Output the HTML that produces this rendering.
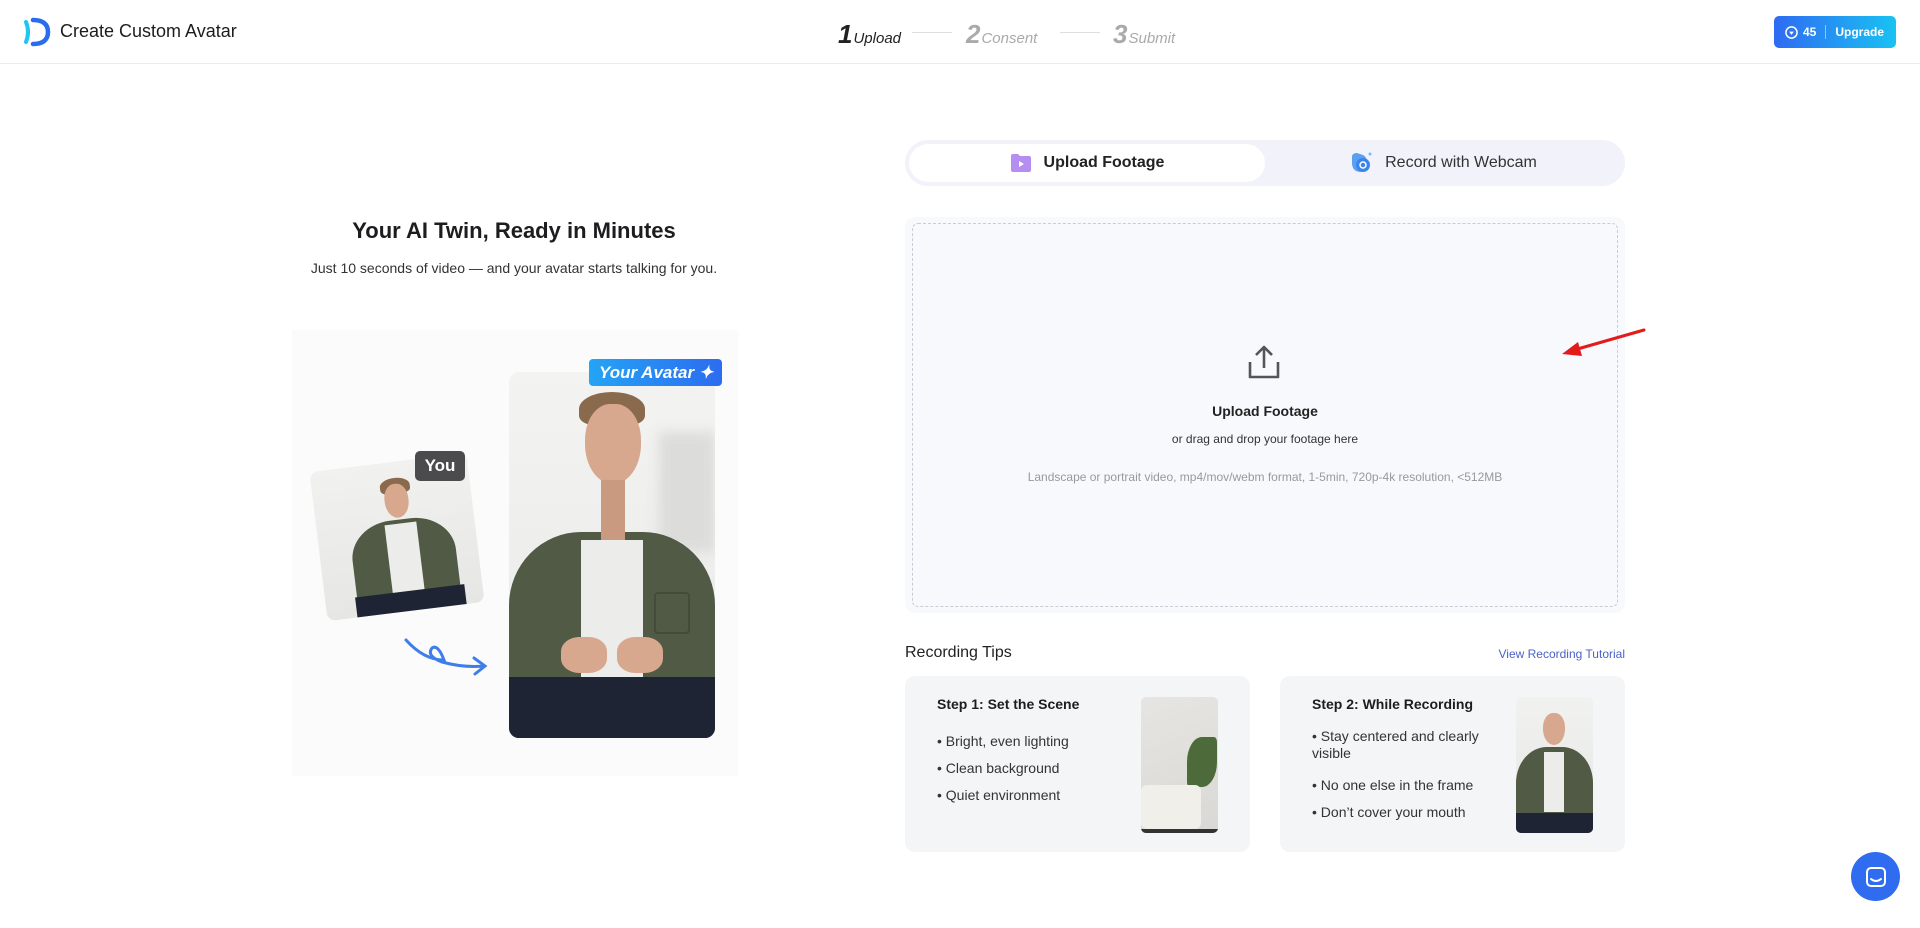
<!DOCTYPE html>
<html><head><meta charset="utf-8"><style>
*{box-sizing:border-box;margin:0;padding:0}
body{width:1920px;height:928px;background:#fff;font-family:"Liberation Sans",sans-serif;color:#1d1d1f;position:relative;overflow:hidden}
.abs{position:absolute}
.hdr{left:0;top:0;width:1920px;height:64px;border-bottom:1px solid #ececef}
.photo{overflow:hidden;background:linear-gradient(#f1f1ef,#e6e6e4)}
.shirt{position:absolute;background:#505a44;border-radius:40% 40% 0 0}
.tee{position:absolute;background:#ececea}
.head{position:absolute;background:#d7a88e;border-radius:45% 45% 50% 50%}
.hair{position:absolute;background:#8a6a4c;border-radius:50% 50% 30% 30%}
.pants{position:absolute;background:#1e2433}
.step{position:absolute;top:19px;font-style:italic;font-size:15px;display:flex;align-items:baseline}
.step b{font-size:26px;margin-right:1px}
</style></head><body>
<div class="abs hdr"></div>
<svg class="abs" style="left:22px;top:16px" width="32" height="32" viewBox="0 0 32 32"><path d="M4 6 Q8 16 4 26" stroke="#1fc6f0" stroke-width="4" fill="none" stroke-linecap="round"/><path d="M11 4 Q26 4 26 16 Q26 28 11 28" stroke="#2a6cf0" stroke-width="4.5" fill="none" stroke-linecap="round"/></svg>
<div class="abs" style="left:60px;top:21px;font-size:18px;font-weight:500">Create Custom Avatar</div>
<div class="step" style="left:838px;color:#222"><b>1</b>Upload</div>
<div class="abs" style="left:912px;top:32px;width:40px;height:1px;background:#ddd"></div>
<div class="step" style="left:966px;color:#aaa"><b>2</b>Consent</div>
<div class="abs" style="left:1060px;top:32px;width:40px;height:1px;background:#ddd"></div>
<div class="step" style="left:1113px;color:#aaa"><b>3</b>Submit</div>
<div class="abs" style="left:1774px;top:16px;width:122px;height:32px;border-radius:5px;background:linear-gradient(90deg,#2f6bf2,#19c2f2);color:#fff;font-size:12px;font-weight:bold;display:flex;align-items:center;padding-left:11px">
<svg width="13" height="13" viewBox="0 0 14 14"><circle cx="7" cy="7" r="6" fill="none" stroke="#fff" stroke-width="1.6"/><path d="M4.5 6 L7 9.5 L9.5 6 Z" fill="#fff"/></svg>
<span style="margin-left:5px">45</span><span style="width:1px;height:14px;background:rgba(255,255,255,.5);margin:0 9px"></span>Upgrade</div>

<div class="abs" style="left:214px;width:600px;top:218px;text-align:center;font-size:22px;font-weight:bold">Your AI Twin, Ready in Minutes</div>
<div class="abs" style="left:214px;width:600px;top:260px;text-align:center;font-size:14px;color:#333">Just 10 seconds of video — and your avatar starts talking for you.</div>

<div class="abs" style="left:292px;top:330px;width:446px;height:446px;background:#fbfbfc"></div>
<!-- small card -->
<div class="abs photo" style="left:318px;top:462px;width:158px;height:150px;border-radius:8px;transform:rotate(-7deg)">
<div class="shirt" style="left:32px;top:58px;width:104px;height:90px"></div>
<div class="tee" style="left:68px;top:62px;width:32px;height:76px"></div>
<div class="hair" style="left:68px;top:16px;width:30px;height:16px"></div>
<div class="head" style="left:71px;top:22px;width:24px;height:34px"></div>
<div class="pants" style="left:30px;top:130px;width:110px;height:30px"></div>
</div>
<div class="abs" style="left:415px;top:451px;width:50px;height:30px;background:#4b4b4d;border-radius:5px;color:#fff;font-weight:bold;font-size:17px;text-align:center;line-height:30px">You</div>
<svg class="abs" style="left:404px;top:636px" width="86" height="44" viewBox="0 0 86 44"><path d="M2 4 Q20 24 40 24 Q34 8 28 12 Q22 20 38 26 Q60 32 80 30" stroke="#3e7ee8" stroke-width="3" fill="none" stroke-linecap="round"/><path d="M70 22 L81 30 L71 38" stroke="#3e7ee8" stroke-width="3" fill="none" stroke-linecap="round"/></svg>
<!-- big card -->
<div class="abs photo" style="left:509px;top:372px;width:206px;height:366px;border-radius:10px;background:linear-gradient(#f3f3f2,#e9e9e7)">
<div class="abs" style="left:150px;top:60px;width:56px;height:120px;background:#dcdcda;filter:blur(6px)"></div>
<div class="shirt" style="left:0;top:160px;width:206px;height:210px;border-radius:35% 35% 0 0"></div>
<div class="tee" style="left:72px;top:168px;width:62px;height:140px"></div>
<div class="hair" style="left:70px;top:20px;width:66px;height:34px"></div>
<div class="head" style="left:76px;top:32px;width:56px;height:80px"></div>
<div class="abs" style="left:92px;top:108px;width:24px;height:60px;background:#c99a80"></div>
<div class="pants" style="left:0;top:305px;width:206px;height:61px"></div>
<div class="abs" style="left:145px;top:220px;width:36px;height:42px;border:2px solid #444c38;border-radius:4px"></div>
<div class="head" style="left:52px;top:265px;width:46px;height:36px;border-radius:40%"></div>
<div class="head" style="left:108px;top:265px;width:46px;height:36px;border-radius:40%"></div>
</div>
<div class="abs" style="left:589px;top:359px;width:133px;height:27px;background:linear-gradient(90deg,#24a4f5,#2c6cf0);border-radius:4px;color:#fff;font-weight:bold;font-style:italic;font-size:17px;line-height:27px;padding-left:10px">Your Avatar ✦</div>

<!-- tabs -->
<div class="abs" style="left:905px;top:140px;width:720px;height:46px;background:#f1f2fa;border-radius:23px"></div>
<div class="abs" style="left:909px;top:144px;width:356px;height:38px;background:#fff;border-radius:19px;display:flex;align-items:center;justify-content:center;font-size:16px;font-weight:bold;color:#222">
<svg width="22" height="22" viewBox="0 0 22 22" style="margin-right:12px"><path d="M1 4 Q1 2 3 2 H8 L10 4 H19 Q21 4 21 6 V18 Q21 20 19 20 H3 Q1 20 1 18Z" fill="#b48ef0"/><path d="M9 9 L14 12 L9 15Z" fill="#fff"/></svg>Upload Footage</div>
<div class="abs" style="left:1265px;top:144px;width:356px;height:38px;display:flex;align-items:center;justify-content:center;font-size:16px;color:#333">
<svg width="26" height="24" viewBox="0 0 26 24" style="margin-right:10px"><path d="M3 6 Q3 2 8 2 L14 4 Q18 6 18 12 Q18 20 11 21 Q3 20 3 12Z" fill="#5aa0f0"/><circle cx="14" cy="14" r="7" fill="#3a84ec"/><circle cx="14" cy="14" r="3" fill="none" stroke="#fff" stroke-width="1.5"/><circle cx="21" cy="3" r="1.5" fill="#7ab8f8"/></svg>Record with Webcam</div>

<!-- dropzone -->
<div class="abs" style="left:905px;top:217px;width:720px;height:396px;background:#f8f9fd;border-radius:10px"></div>
<div class="abs" style="left:912px;top:223px;width:706px;height:384px;border:1px dashed #c9cbd6;border-radius:6px"></div>
<svg class="abs" style="left:1247px;top:344px" width="34" height="36" viewBox="0 0 34 36"><path d="M17 24 V4 M9 11 L17 3 L25 11 M3 18 V33 H31 V18" stroke="#555" stroke-width="2.6" fill="none" stroke-linejoin="round"/></svg>
<div class="abs" style="left:905px;width:720px;top:403px;text-align:center;font-size:14px;font-weight:bold;color:#222">Upload Footage</div>
<div class="abs" style="left:905px;width:720px;top:432px;text-align:center;font-size:12px;color:#333">or drag and drop your footage here</div>
<div class="abs" style="left:905px;width:720px;top:470px;text-align:center;font-size:12px;color:#999">Landscape or portrait video, mp4/mov/webm format, 1-5min, 720p-4k resolution, &lt;512MB</div>
<svg class="abs" style="left:1558px;top:326px" width="90" height="34" viewBox="0 0 90 34"><path d="M86 4 L16 24" stroke="#e21b1b" stroke-width="3" stroke-linecap="round"/><path d="M4 28 L20 16 L24 30Z" fill="#e21b1b"/></svg>

<div class="abs" style="left:905px;top:644px;font-size:16px;color:#222">Recording Tips</div>
<div class="abs" style="left:1400px;width:225px;top:647px;text-align:right;font-size:12px;color:#4a62c8">View Recording Tutorial</div>

<div class="abs" style="left:905px;top:676px;width:345px;height:176px;background:#f4f5f7;border-radius:10px"></div>
<div class="abs" style="left:937px;top:696px;font-size:14px;font-weight:bold">Step 1: Set the Scene</div>
<div class="abs" style="left:937px;top:728px;font-size:14px;color:#333;line-height:27px">• Bright, even lighting<br>• Clean background<br>• Quiet environment</div>
<div class="abs" style="left:1141px;top:697px;width:77px;height:136px;border-radius:5px;background:linear-gradient(160deg,#e6e5e2,#d9d8d4);overflow:hidden">
<div class="abs" style="left:46px;top:40px;width:30px;height:50px;background:#4d6a3a;border-radius:50% 10% 50% 10%"></div>
<div class="abs" style="left:0;top:88px;width:60px;height:44px;background:#f1efea;border-radius:6px"></div>
<div class="abs" style="left:0;top:132px;width:77px;height:4px;background:#333"></div></div>

<div class="abs" style="left:1280px;top:676px;width:345px;height:176px;background:#f4f5f7;border-radius:10px"></div>
<div class="abs" style="left:1312px;top:696px;font-size:14px;font-weight:bold">Step 2: While Recording</div>
<div class="abs" style="left:1312px;top:728px;font-size:14px;color:#333;line-height:17px">• Stay centered and clearly<br>visible</div>
<div class="abs" style="left:1312px;top:772px;font-size:14px;color:#333;line-height:27px">• No one else in the frame<br>• Don’t cover your mouth</div>
<div class="abs photo" style="left:1516px;top:697px;width:77px;height:136px;border-radius:5px">
<div class="shirt" style="left:0;top:50px;width:77px;height:90px"></div>
<div class="tee" style="left:28px;top:55px;width:20px;height:60px"></div>
<div class="head" style="left:27px;top:16px;width:22px;height:32px"></div>
<div class="pants" style="left:0;top:116px;width:77px;height:20px"></div></div>

<div class="abs" style="left:1851px;top:852px;width:49px;height:49px;border-radius:50%;background:#2f6cf0;display:flex;align-items:center;justify-content:center">
<svg width="24" height="24" viewBox="0 0 24 24"><rect x="3" y="3" width="18" height="18" rx="4" fill="none" stroke="#fff" stroke-width="2"/><path d="M7 14 Q12 18 17 14" stroke="#fff" stroke-width="2" fill="none" stroke-linecap="round"/></svg></div>
</body></html>
